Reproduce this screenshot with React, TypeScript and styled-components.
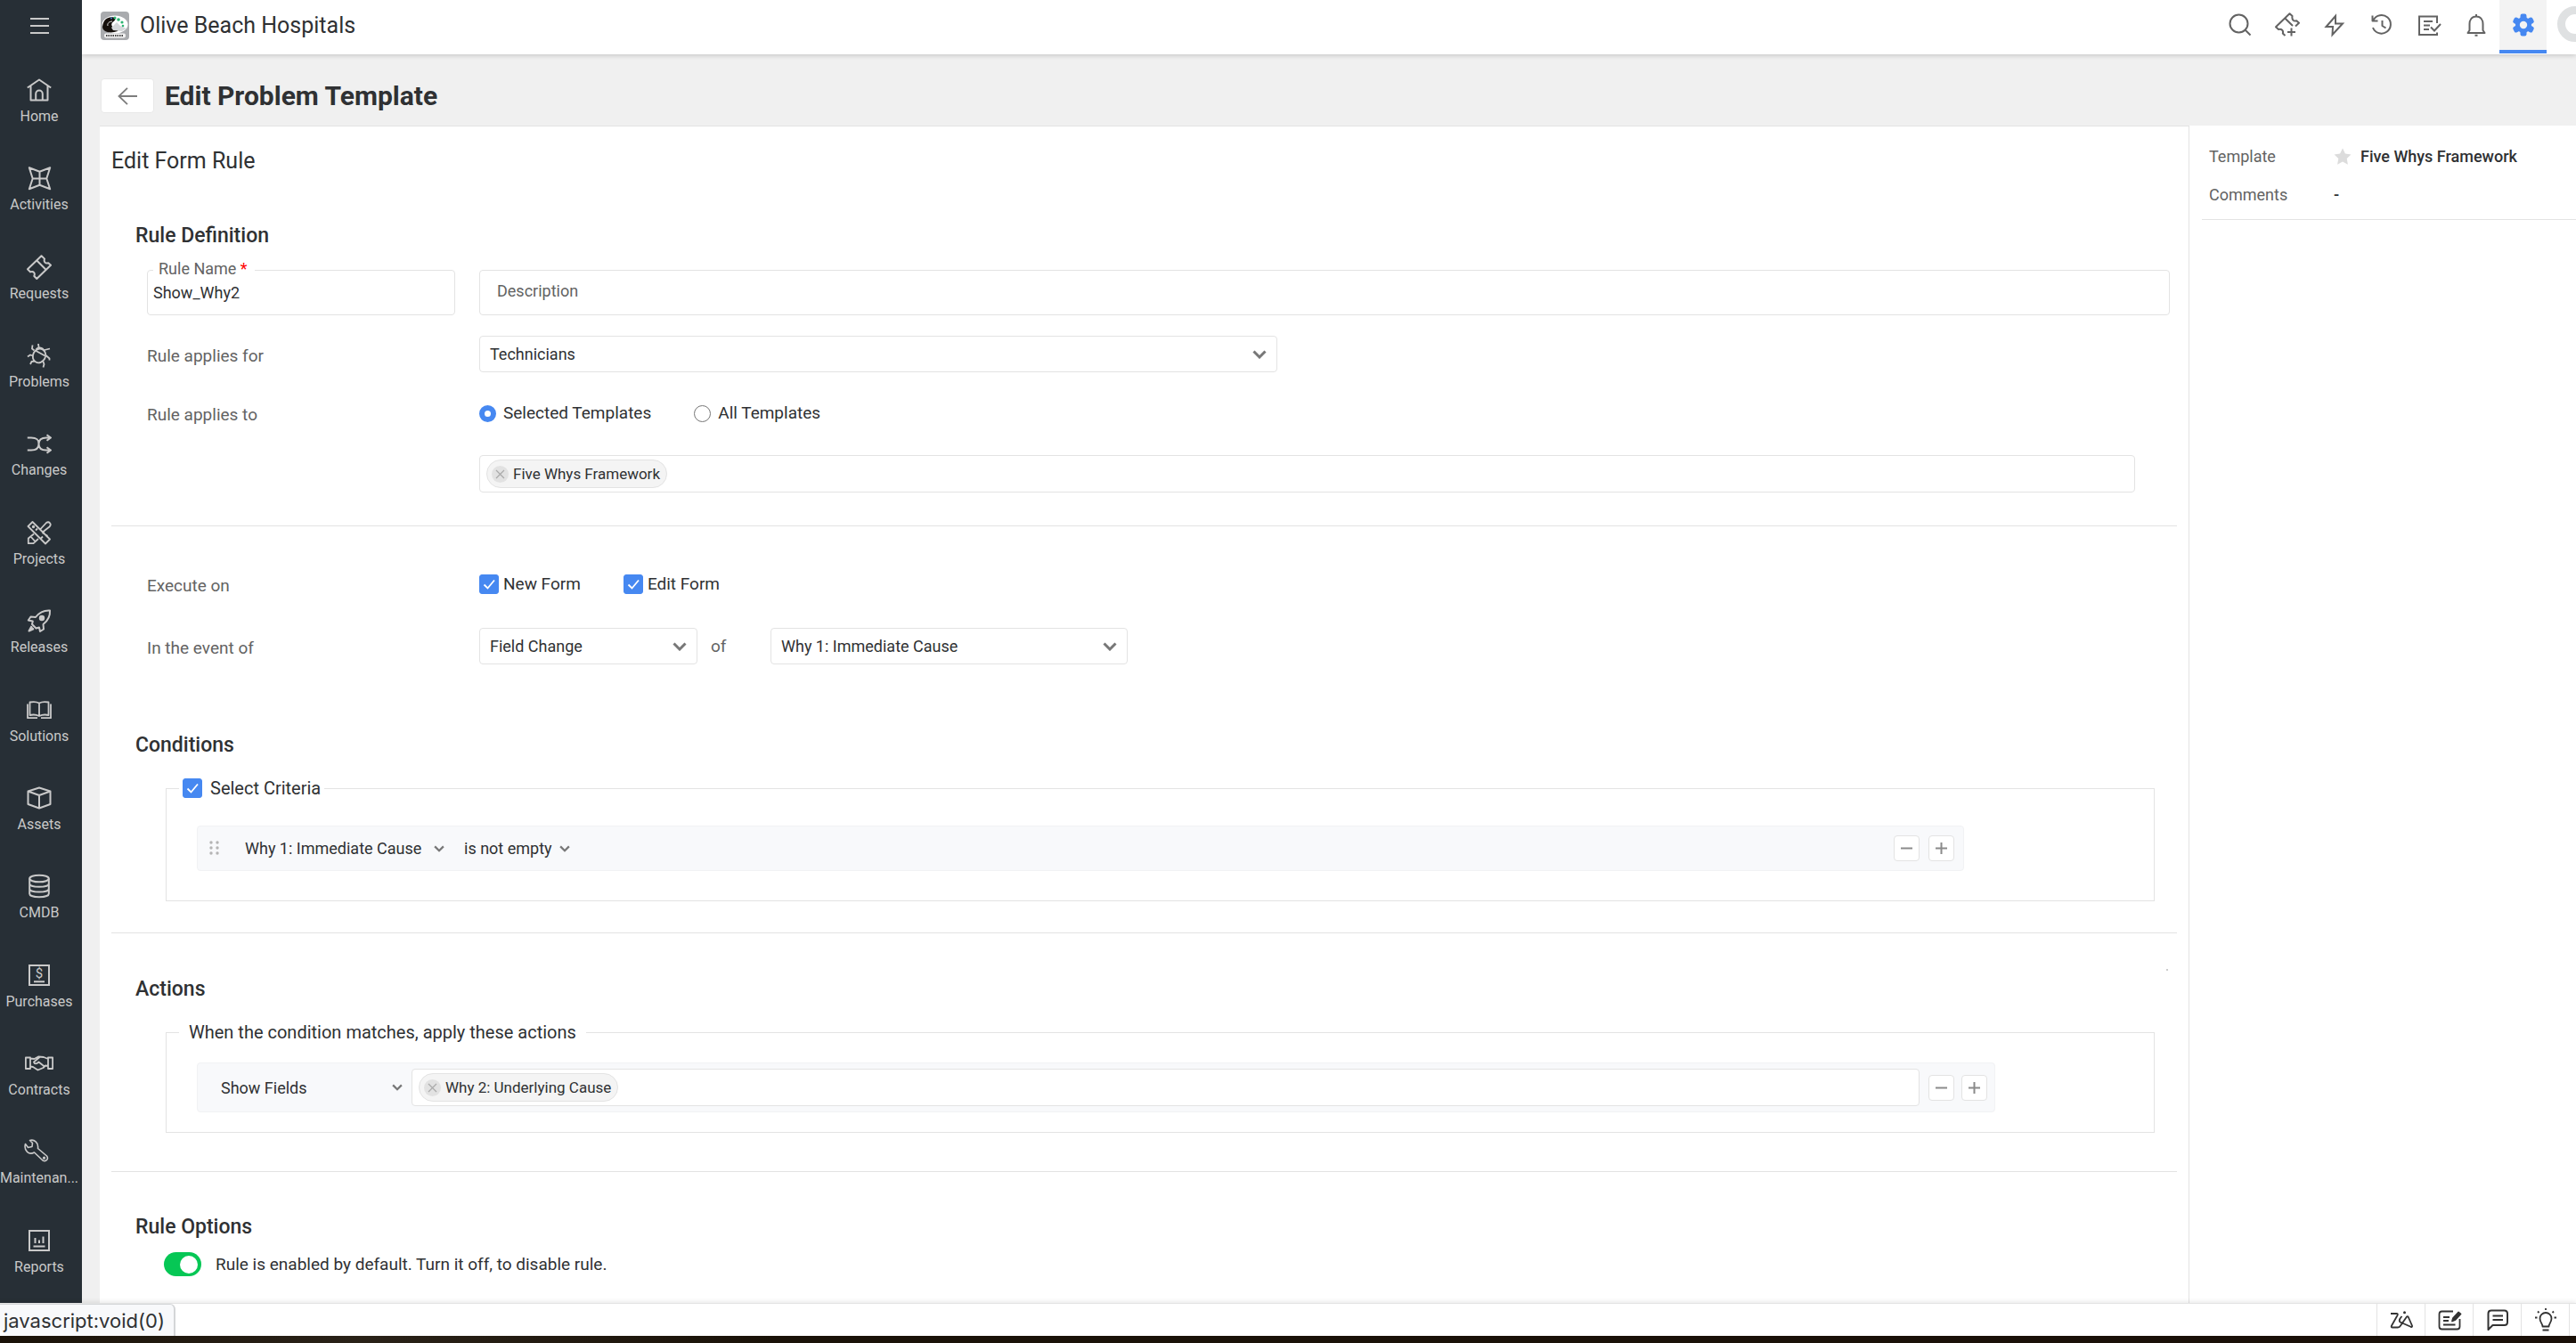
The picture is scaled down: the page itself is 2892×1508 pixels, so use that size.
import React from "react";
import styled, { createGlobalStyle, css } from "styled-components";

const color = {
  ink: "#2f3133",
  label: "#636363",
  line: "#e3e3e3",
  page: "#f0f0f0",
  blue: "#4688f1",
  nav: "#272f36",
  navText: "#c9c9c9",
  row: "#f8f9fb",
};

const GlobalStyle = createGlobalStyle`
  *, *::before, *::after { box-sizing: border-box; }
  html, body { margin: 0; height: 100%; }
  #root { height: 100%; }
  body, button {
    font-family: Roboto, "Liberation Sans", sans-serif;
    font-size: 19px;
    color: ${color.ink};
  }
  input, select {
    font-family: Roboto, "Liberation Sans", sans-serif;
    font-size: 18px;
    color: ${color.ink};
  }
  button { padding: 0; cursor: pointer; }
  body { overflow: hidden; background: ${color.page}; }
`;

/* ---------- shell ---------- */

const Shell = styled.div`
  display: flex;
  flex-direction: column;
  height: 100vh;
`;

const Workspace = styled.div`
  display: flex;
  flex: 1;
  min-height: 0;
`;

const Sidebar = styled.nav`
  display: flex;
  flex-direction: column;
  width: 92px;
  flex-shrink: 0;
  padding-right: 4px;
  background: ${color.nav};
  color: ${color.navText};
  overflow: hidden;
`;

const MenuButton = styled.button`
  display: flex;
  align-items: center;
  justify-content: center;
  height: 58px;
  margin-bottom: 14px;
  border: 0;
  background: none;
  color: inherit;
`;

const NavList = styled.ul`
  display: flex;
  flex-direction: column;
  flex: 1;
  margin: 0;
  padding: 0;
  list-style: none;
`;

const NavItem = styled.li`
  flex: 1;
`;

const NavLink = styled.a`
  display: flex;
  flex-direction: column;
  align-items: center;
  gap: 6px;
  padding-top: 15px;
  color: inherit;
  font-size: 16px;
  line-height: 20px;
  text-decoration: none;
  white-space: nowrap;
`;

const Main = styled.div`
  display: flex;
  flex-direction: column;
  flex: 1;
  min-width: 0;
`;

const TopBar = styled.header`
  display: flex;
  align-items: center;
  height: 61px;
  flex-shrink: 0;
  padding-left: 21px;
  background: #fff;
  box-shadow: 0 1px 6px rgba(0, 0, 0, 0.2);
  clip-path: inset(0 0 -8px 0);
`;

const Brand = styled.div`
  display: flex;
  align-items: center;
  gap: 12px;
  flex: 1;
  padding-bottom: 3px;
  font-size: 25px;
  line-height: 32px;
`;

const Tools = styled.div`
  display: flex;
  align-self: stretch;
`;

const Tool = styled.button<{ $active?: boolean }>`
  display: flex;
  align-items: center;
  justify-content: center;
  width: 53px;
  height: 60px;
  border: 0;
  border-bottom: 4px solid transparent;
  background: none;
  color: ${color.label};
  ${(p) =>
    p.$active &&
    css`
      background: #f3f3f3;
      border-bottom-color: ${color.blue};
      color: ${color.blue};
    `}
`;

const AvatarClip = styled.div`
  display: flex;
  align-items: center;
  width: 33px;
  padding: 0 0 8px 12px;
  overflow: hidden;
`;

const Avatar = styled.span`
  width: 40px;
  height: 40px;
  flex-shrink: 0;
  border: 9px solid #dfe1e2;
  border-radius: 50%;
`;

const PageHead = styled.div`
  display: flex;
  align-items: center;
  gap: 12px;
  flex-shrink: 0;
  padding: 27px 20px 14px 21px;
`;

const BackButton = styled.button`
  display: flex;
  align-items: center;
  justify-content: center;
  width: 60px;
  height: 39px;
  border: 1px solid #e8e8e8;
  border-radius: 4px;
  background: #fff;
  color: #7d7d7d;
`;

const PageTitle = styled.h1`
  margin: 0;
  font-size: 30px;
  font-weight: 700;
  line-height: 36px;
`;

const Columns = styled.div`
  display: flex;
  flex: 1;
  min-height: 0;
  padding-left: 20px;
`;

const Panel = styled.main`
  flex: 1;
  min-width: 0;
  padding: 23px 13px 0;
  border: solid ${color.line};
  border-width: 1px 1px 0 0;
  background: #fff;
  overflow: hidden;
`;

const Aside = styled.aside`
  width: 434px;
  flex-shrink: 0;
  padding: 19px 0 0 14px;
  background: #fff;
`;

const Facts = styled.dl`
  display: grid;
  grid-template-columns: 140px 1fr;
  row-gap: 15px;
  margin: 0;
  padding: 2px 0 13px 8px;
  border-bottom: 1px solid ${color.line};
  line-height: 28px;
`;

const FactName = styled.dt`
  font-size: 18px;
  color: ${color.label};
`;

const FactValue = styled.dd`
  display: flex;
  align-items: center;
  gap: 10px;
  margin: 0;
  font-size: 18px;
  font-weight: 500;
`;

/* ---------- form ---------- */

const FormTitle = styled.h2`
  margin: 0;
  font-size: 25px;
  font-weight: 400;
  line-height: 32px;
`;

const SectionTitle = styled.h3<{ $top: number }>`
  margin: ${(p) => p.$top}px 0 0 27px;
  font-size: 23px;
  font-weight: 500;
  line-height: 28px;
`;

const Divider = styled.hr<{ $top: number }>`
  height: 1px;
  margin: ${(p) => p.$top}px 0 0;
  border: 0;
  background: ${color.line};
`;

const Marker = styled.div`
  width: 2px;
  height: 2px;
  margin: 40px 10px 0 auto;
  background: #ccc;
`;

const FormRow = styled.div<{ $top: number }>`
  display: grid;
  grid-template-columns: 346px 1fr;
  column-gap: 27px;
  align-items: center;
  margin: ${(p) => p.$top}px 8px 0 40px;
`;

const labelText = css`
  color: ${color.label};
  font-size: 19px;
  line-height: 24px;
`;

const RowLabel = styled.label`
  ${labelText}
  padding-top: 4px;
`;

const RowName = styled.span`
  ${labelText}
  padding-top: 4px;
`;

const Inline = styled.div<{ $gap: number }>`
  display: flex;
  align-items: center;
  gap: ${(p) => p.$gap}px;
`;

const Joiner = styled.span`
  ${labelText}
  width: 82px;
  padding-left: 15px;
`;

const FloatField = styled.div`
  position: relative;
  height: 51px;
`;

const FloatLabel = styled.label`
  position: absolute;
  top: -13px;
  left: 7px;
  padding: 0 8px 0 6px;
  background: #fff;
  color: ${color.label};
  font-size: 18px;
  line-height: 24px;
`;

const Required = styled.span`
  color: #f00;
`;

const TextInput = styled.input<{ $inset: number }>`
  width: 100%;
  height: 51px;
  padding: 0 ${(p) => p.$inset}px;
  border: 1px solid ${color.line};
  border-radius: 4px;
  background: #fff;
  outline: 0;
  &::placeholder {
    color: ${color.label};
    opacity: 1;
  }
`;

const DescriptionInput = styled(TextInput)`
  padding-bottom: 4px;
`;

const SelectBox = styled.div<{ $width: number }>`
  display: grid;
  align-items: center;
  width: ${(p) => p.$width}px;
  max-width: 100%;
  color: #777;
  & > * {
    grid-area: 1 / 1;
  }
  & > svg {
    justify-self: end;
    margin-right: 12px;
    pointer-events: none;
  }
`;

const SelectControl = styled.select`
  width: 100%;
  height: 41px;
  padding: 0 36px 0 11px;
  border: 1px solid ${color.line};
  border-radius: 4px;
  background: #fff;
  appearance: none;
`;

const PlainSelectBox = styled(SelectBox)`
  & > svg {
    margin-right: 0;
  }
`;

const PlainSelect = styled.select`
  width: 100%;
  height: 32px;
  padding: 0 14px 0 0;
  border: 0;
  background: transparent;
  appearance: none;
`;

const Choice = styled.label<{ $gap: number }>`
  display: flex;
  align-items: center;
  gap: ${(p) => p.$gap}px;
  line-height: 24px;
`;

const Radio = styled.input`
  width: 19px;
  height: 19px;
  margin: 0;
  border: 1px solid #767676;
  border-radius: 50%;
  background: #fff;
  appearance: none;
  &:checked {
    border: 6px solid ${color.blue};
  }
`;

const CheckWrap = styled.span`
  display: grid;
  color: #fff;
  & > * {
    grid-area: 1 / 1;
  }
  & > svg {
    pointer-events: none;
  }
`;

const CheckInput = styled.input`
  width: 22px;
  height: 22px;
  margin: 0;
  border: 1px solid #999;
  border-radius: 3px;
  appearance: none;
  &:checked {
    border-color: ${color.blue};
    background: ${color.blue};
  }
`;

const TagField = styled.div`
  display: flex;
  align-items: center;
  flex: 1;
  min-width: 0;
  height: 42px;
  padding: 0 7px;
  border: 1px solid ${color.line};
  border-radius: 4px;
  background: #fff;
`;

const TagRow = styled.div`
  display: flex;
  grid-column: 2;
  margin-right: 39px;
`;

const Tag = styled.span`
  display: flex;
  align-items: center;
  gap: 5px;
  height: 32px;
  padding: 0 7px 0 5px;
  border: 1px solid ${color.line};
  border-radius: 16px;
  background: #f4f4f4;
  font-size: 17px;
  line-height: 24px;
  white-space: nowrap;
`;

const TagRemove = styled.button`
  display: flex;
  align-items: center;
  justify-content: center;
  width: 19px;
  height: 19px;
  border: 0;
  border-radius: 50%;
  background: #e2e2e2;
  color: #aaa;
`;

const TagInput = styled.input`
  flex: 1;
  min-width: 0;
  border: 0;
  outline: 0;
  background: none;
`;

const Group = styled.fieldset<{ $pad: string }>`
  margin: 22px 25px 0 61px;
  padding: ${(p) => p.$pad};
  border: 1px solid ${color.line};
`;

const GroupLegend = styled.legend<{ $inset: number }>`
  margin-left: -20px;
  padding: 0 ${(p) => p.$inset}px;
  font-size: 20px;
  line-height: 24px;
`;

const RuleRow = styled.div<{ $height: number }>`
  display: flex;
  align-items: center;
  height: ${(p) => p.$height}px;
  border: 1px solid #f1f2f4;
  border-radius: 4px;
  background: ${color.row};
`;

const Handle = styled.button`
  display: flex;
  margin: 0 28px 0 13px;
  border: 0;
  background: none;
  color: #b4b4b4;
`;

const ActionCell = styled.div`
  padding: 0 10px 0 26px;
`;

const StepButtons = styled.div<{ $gap: number }>`
  display: flex;
  gap: ${(p) => p.$gap}px;
  margin: 0 ${(p) => p.$gap}px 0 auto;
  padding-left: 10px;
`;

const StepButton = styled.button`
  display: flex;
  align-items: center;
  justify-content: center;
  width: 29px;
  height: 29px;
  border: 1px solid ${color.line};
  border-radius: 4px;
  background: #fff;
  color: #8a8a8a;
`;

const SwitchRow = styled.label`
  display: flex;
  align-items: center;
  gap: 16px;
  margin: 14px 0 0 59px;
  line-height: 27px;
`;

const Switch = styled.input`
  display: flex;
  align-items: center;
  justify-content: flex-end;
  width: 42px;
  height: 27px;
  margin: 0;
  padding: 0 4px;
  border-radius: 14px;
  background: #06c755;
  appearance: none;
  &::before {
    content: "";
    width: 20px;
    height: 20px;
    border-radius: 50%;
    background: #fff;
  }
`;

/* ---------- footer ---------- */

const Footer = styled.footer`
  position: relative;
  display: flex;
  justify-content: space-between;
  height: 37px;
  flex-shrink: 0;
  background: #fff;
  border-top: 1px solid #e3e3e3;
  box-shadow: 0 -2px 5px rgba(0, 0, 0, 0.08);
`;

const LinkStatus = styled.div`
  padding: 0 10px 0 4px;
  border: solid #d4d6d8;
  border-width: 1px 2px 0 0;
  border-radius: 0 6px 0 12px;
  background: #f8f9fb;
  font-family: Inter, sans-serif;
  font-size: 22px;
  line-height: 36px;
`;

const FooterTools = styled.div`
  display: flex;
  padding-right: 7px;
  border-left: 1px solid ${color.line};
`;

const FooterTool = styled.button`
  display: flex;
  align-items: center;
  justify-content: center;
  width: 54px;
  border: 0;
  border-right: 1px solid ${color.line};
  background: none;
  color: #333;
`;

const Desktop = styled.div`
  height: 8px;
  flex-shrink: 0;
  background: linear-gradient(90deg, #1a1208 0%, #2a2218 14%, #1a1208 30%, #1a1008 100%);
`;

/* ---------- icons ---------- */

type IconProps = { size?: number; stroke?: number; children: React.ReactNode; join?: "round" | "miter" };

const Icon = ({ size = 28, stroke = 2, join = "round", children }: IconProps) => (
  <svg
    width={size}
    height={size}
    viewBox="0 0 28 28"
    fill="none"
    stroke="currentColor"
    strokeWidth={stroke}
    strokeLinejoin={join}
    aria-hidden="true"
  >
    {children}
  </svg>
);

const Chevron = ({ small }: { small?: boolean }) => (
  <svg
    width={small ? 12 : 16}
    height={small ? 8 : 10}
    viewBox="0 0 16 10"
    fill="none"
    stroke="currentColor"
    strokeWidth="3"
    aria-hidden="true"
  >
    <path d="M1.5 1.5 8 8l6.5-6.5" />
  </svg>
);

const Tick = () => (
  <svg width="22" height="22" viewBox="0 0 22 22" fill="none" stroke="currentColor" strokeWidth="1.8" aria-hidden="true">
    <path d="M5.5 11.5 9.5 15.5 17 6.5" />
  </svg>
);

const Minus = () => (
  <svg width="13" height="13" viewBox="0 0 13 13" stroke="currentColor" strokeWidth="2" aria-hidden="true">
    <path d="M0 6.5H13" />
  </svg>
);

const Plus = () => (
  <svg width="13" height="13" viewBox="0 0 13 13" stroke="currentColor" strokeWidth="2" aria-hidden="true">
    <path d="M0 6.5H13M6.5 0V13" />
  </svg>
);

const navIcons: Record<string, React.ReactNode> = {
  Home: (
    <Icon>
      <path d="M.8 11.5 14 2.5l13.2 9M4.5 9.5V25.500h19V9.500M10.200 25.500v-7a3.800 4 0 0 1 7.600 0v7" />
    </Icon>
  ),
  Activities: (
    <Icon>
      <path d="M2.8 2.2 14.5 6.8 26.2 2.2 22.3 14.5 26.2 26.2 14.5 21.8 2.8 26.2 6.7 14.5ZM14.5 6.8V21.800M6.700 14.500H22.300" />
    </Icon>
  ),
  Requests: (
    <Icon>
      <path d="M16.5 1.2 20 4.6C18.8 8 21 10.400 24.200 9.200L27 11.800 11.300 27 8.300 24C9.800 20.500 7.500 18 4 19.400L1 16.300ZM11.800 7 21 16.200" />
    </Icon>
  ),
  Problems: (
    <Icon stroke={1.8}>
      <ellipse cx="14" cy="14.5" rx="7" ry="8" transform="rotate(28 14 14.5)" />
      <path d="M9.5 8.5 20.5 14.5M10.5 7.5C12 4.5 17.5 4 20 9.500M13.500 5 13 1M20 8l6-1.500M21.500 14l4 3.500v2M18.500 21l1 3-1 3.500M8.500 8.500 6 6.500l.5-4M7 14.500l-3-1-3 2M9 20.500l-3.500.5-1.500 3" />
    </Icon>
  ),
  Changes: (
    <Icon>
      <path d="M.8 7.5H5C12 7.5 13.5 10 13.5 14.5S11 21.5 5 21.500H.8M26 7.500H22C15.500 7.500 13.500 10 13.500 14.500S15.500 21.500 22 21.500H26M22.500 4.200 27 7.500l-4.500 3.300M22.500 18.200 27 21.500l-4.500 3.300" />
    </Icon>
  ),
  Projects: (
    <Icon stroke={1.8}>
      <path d="M6.5 2 26 21.5 21 26.5 1.5 7ZM10 11.5l2-2M17.500 15l2-2M16 20.500l2-2M21.500 18.500l2-1.500M8 15.500 1.800 20.500V26.200H7.500L13 21M4.500 18.500 9.500 24M15.500 10 22 3C25 .8 28.500 4.500 25.500 7.500L18.500 13" />
      <circle cx="7.5" cy="7.5" r=".8" />
    </Icon>
  ),
  Releases: (
    <Icon>
      <path d="M26 2.5C18.5 2 13.5 5.5 10 10L4.5 9.5 1.8 13.5 6.8 14.5 6 18 10.5 22.5 14 21.500 15 26 19 23.500 18.500 18C23 14.500 26.500 9.500 26 2.500Z" />
      <circle cx="17" cy="11" r="2.2" fill="currentColor" />
      <path d="M5.5 20 2.5 25.5 8 23" fill="currentColor" />
    </Icon>
  ),
  Solutions: (
    <Icon stroke={1.8}>
      <path d="M14 6.500C11 4.800 7 4.800 3.500 5.500V20C7 19.200 11 19.500 14 21 17 19.500 21 19.200 24.500 20V5.500C21 4.800 17 4.800 14 6.500V21M1 7.500V23.200H12M27 7.500V23.200H16" />
    </Icon>
  ),
  Assets: (
    <Icon>
      <path d="M14 2.5 26.5 6.5V21L14 25.5 1.5 21V6.500ZM1.500 6.500 14 11 26.500 6.500M14 11V25.500" />
    </Icon>
  ),
  CMDB: (
    <Icon>
      <ellipse cx="14" cy="5.5" rx="10.8" ry="3.8" />
      <path d="M3.2 5.5V22.5C3.2 27.5 24.8 27.5 24.8 22.5V5.5M3.2 11.200C3.200 16 24.800 16 24.800 11.200M3.200 17C3.200 21.800 24.800 21.800 24.800 17" />
    </Icon>
  ),
  Purchases: (
    <Icon join="miter">
      <path d="M3 3H25V25H3ZM8 21.2H20" />
      <text x="14" y="16.5" fontSize="15" textAnchor="middle" fill="currentColor" stroke="none">
        $
      </text>
    </Icon>
  ),
  Contracts: (
    <svg
      width="32"
      height="28"
      viewBox="0 0 32 28"
      fill="none"
      stroke="currentColor"
      strokeWidth="1.8"
      strokeLinejoin="round"
      aria-hidden="true"
    >
      <path d="M.9 7.500H6V20H.9ZM26 7.500H31.100V20H26ZM6 8.500 10.500 9 15 6.500 21 7 26 9M6 17.500 9 18 14.500 21.500 20.500 19 23 16.500 26 17M16.500 7 10 12.500C10.500 15 13 15 15.500 12.500L22.500 18" />
    </svg>
  ),
  "Maintenan...": (
    <svg
      width="34"
      height="28"
      viewBox="0 0 34 28"
      fill="none"
      stroke="currentColor"
      strokeWidth="1.6"
      strokeLinejoin="round"
      aria-hidden="true"
    >
      <path d="M1.500 5.500 4.500 9.500 9 8.500 9.500 4.500 6.500 1.500C11 0 16.500 3.500 15.500 10.500L25.500 19C28 22.500 24.500 26 21 24L11.500 15C5.500 18.500-.500 13 1.500 5.500Z" />
      <circle cx="22.5" cy="21.2" r=".8" />
    </svg>
  ),
  Reports: (
    <Icon join="miter">
      <path d="M3 3H25V25H3ZM7.5 20.5H20.5M9.5 17V11M14 17V13.5M18.5 17V9.500" />
    </Icon>
  ),
};

const TicketPlusIcon = () => (
  <Icon>
    <path d="M11.5 26 8.8 23.5C9.8 20.5 7.5 18 4 19L1 16.3 16.500 1.200 19.500 4C18.800 8 21 10.400 24.200 9.200L27 11.800 23 15.500M11.800 7 20 15M18.500 17.500V26.500M14 22H23" />
  </Icon>
);

const topTools: { name: string; icon: React.ReactNode; active?: boolean }[] = [
  {
    name: "Search",
    icon: (
      <Icon>
        <circle cx="12.5" cy="12.5" r="10" />
        <path d="M19.5 19.5 25.5 25.5" />
      </Icon>
    ),
  },
  { name: "New request", icon: <TicketPlusIcon /> },
  {
    name: "Quick actions",
    icon: (
      <Icon join="miter">
        <path d="M15 4 4.500 16H12L11.500 25 23 12.500H15Z" />
      </Icon>
    ),
  },
  {
    name: "Recent items",
    icon: (
      <Icon>
        <path d="M4.5 8.500A10.300 10.300 0 1 1 4 17M3.500 3.500V9.500H9.500M14.500 9V15L18.500 17.500" />
      </Icon>
    ),
  },
  {
    name: "Tasks",
    icon: (
      <Icon join="miter">
        <path d="M23 12V4.5H3V25H23V22.500M8 10H18M8 14.500H15M8 19H14M16 16.500 20 20.500 27 13" />
      </Icon>
    ),
  },
  {
    name: "Notifications",
    icon: (
      <Icon>
        <path d="M14 4.500C8.500 4.500 6.500 9 6.500 13V20L4.500 23H23.500L21.500 20V13C21.500 9 19.500 4.500 14 4.500ZM14 2V5M12.500 25.800H15.500" />
      </Icon>
    ),
  },
  {
    name: "Admin",
    active: true,
    icon: (
      <svg width="26" height="28" viewBox="0 0 26 28" aria-hidden="true">
        <g fill="currentColor">
          {[0, 60, 120].map((a) => (
            <rect key={a} x="9.5" y="1.5" width="7" height="25" rx="2.2" transform={`rotate(${a} 13 14)`} />
          ))}
          <circle cx="13" cy="14" r="9" />
        </g>
        <circle cx="13" cy="14" r="4.2" fill="#f3f3f3" />
      </svg>
    ),
  },
];

const footerTools: { name: string; icon: React.ReactNode }[] = [
  {
    name: "Zia",
    icon: (
      <Icon stroke={1.8}>
        <path d="M2 7H8.500Q10.500 7 9.500 9L3 20.500Q2 22.500 4 22.500H10Q12 22.500 13 20.500L20 10.500Q21 9.500 21.800 11L26 20.500Q26.500 22.500 24.500 21.800L12.500 16.500Q11 15 12.500 12.500L14.500 10" />
        <circle cx="17.5" cy="5.8" r="1.5" fill="currentColor" stroke="none" />
      </Icon>
    ),
  },
  {
    name: "Notes",
    icon: (
      <Icon stroke={1.8}>
        <path d="M18 4.500H5.500Q2.500 4.500 2.500 7.500V21.500Q2.500 24.500 5.500 24.500H22.500Q25.500 24.500 25.500 21.500V13M7 11H14M7 15H13M7 19.500H20.500" />
        <path d="M17 15.500 18 12 24 5.500 26.500 7.500 20.500 14Z" fill="currentColor" />
      </Icon>
    ),
  },
  {
    name: "Chat",
    icon: (
      <Icon>
        <path d="M3.500 25V7Q3.500 3.500 7 3.500H21.500Q25 3.500 25 7V16.500Q25 20 21.500 20H8.500ZM8.500 9.500H20M8.500 14H20" />
      </Icon>
    ),
  },
  {
    name: "Tips",
    icon: (
      <Icon stroke={1.8}>
        <path d="M10.500 21.500C10.500 18 7.500 17 7.500 12.500A6.500 6.500 0 0 1 20.500 12.500C20.500 17 17.500 18 17.500 21.500ZM10.500 25.500H17.500M14 3V1M6.500 6 5 4.500M21.500 6 23 4.500M4.500 11.500H2M23.500 11.500H26" />
      </Icon>
    ),
  },
];

const BrandMark = () => (
  <svg width="32" height="32" viewBox="0 0 32 32" aria-hidden="true">
    <rect width="32" height="32" rx="4" fill="#a9abae" />
    <ellipse cx="16" cy="14.5" rx="14.5" ry="10" fill="#fff" />
    <path d="M2 17C3 8 9 5 15 6.500 18 8 16 10 13 12.500 11 15 13 19 20 20L19 22C11 25 2 23 2 17Z" fill="#16110d" />
    <path d="M8 16C7 13 10 11 13 11" fill="none" stroke="#ddd" />
    <path d="M12 18 18 12 22 16 29 19 24 22 14 21Z" fill="#d5d8da" />
    <g fill="#2db573">
      <circle cx="16" cy="7" r="1.5" />
      <circle cx="20" cy="9" r="1.8" />
      <circle cx="24" cy="12" r="1.6" />
      <circle cx="25" cy="16" r="1.3" />
    </g>
    <circle cx="12" cy="7.5" r="1" fill="#3d7ed0" />
    <rect x="4" y="24.5" width="24" height="5" rx="2" fill="#f2f2f2" />
    <path d="M6 27H26" stroke="#444" strokeWidth="2" strokeDasharray="1.5 1" />
  </svg>
);

/* ---------- parts ---------- */

const Checkbox = () => (
  <CheckWrap>
    <CheckInput type="checkbox" defaultChecked />
    <Tick />
  </CheckWrap>
);

const Chip = ({ text }: { text: string }) => (
  <Tag>
    <TagRemove type="button" aria-label={`Remove ${text}`}>
      <svg width="11" height="11" viewBox="0 0 11 11" stroke="currentColor" strokeWidth="1.2" aria-hidden="true">
        <path d="M1 1 10 10M10 1 1 10" />
      </svg>
    </TagRemove>
    {text}
  </Tag>
);

const Steps = ({ gap }: { gap: number }) => (
  <StepButtons $gap={gap}>
    <StepButton type="button" aria-label="Remove row">
      <Minus />
    </StepButton>
    <StepButton type="button" aria-label="Add row">
      <Plus />
    </StepButton>
  </StepButtons>
);

const Dropdown = ({ id, value, width, label }: { id: string; value: string; width: number; label?: string }) => (
  <SelectBox $width={width}>
    <SelectControl id={id} aria-label={label} defaultValue={value}>
      <option>{value}</option>
    </SelectControl>
    <Chevron />
  </SelectBox>
);

const PlainDropdown = ({ value, width, label }: { value: string; width: number; label: string }) => (
  <PlainSelectBox $width={width}>
    <PlainSelect aria-label={label} defaultValue={value}>
      <option>{value}</option>
    </PlainSelect>
    <Chevron small />
  </PlainSelectBox>
);

export default function App() {
  return (
    <Shell>
      <GlobalStyle />
      <Workspace>
        <Sidebar aria-label="Modules">
          <MenuButton type="button" aria-label="Menu">
            <svg width="21" height="18" viewBox="0 0 21 18" stroke="currentColor" strokeWidth="2" aria-hidden="true">
              <path d="M0 1H21M0 9H21M0 17H21" />
            </svg>
          </MenuButton>
          <NavList>
            {Object.entries(navIcons).map(([name, icon]) => (
              <NavItem key={name}>
                <NavLink href="#">
                  {icon}
                  {name}
                </NavLink>
              </NavItem>
            ))}
          </NavList>
        </Sidebar>

        <Main>
          <TopBar>
            <Brand>
              <BrandMark />
              Olive Beach Hospitals
            </Brand>
            <Tools>
              {topTools.map((t) => (
                <Tool key={t.name} type="button" aria-label={t.name} $active={t.active}>
                  {t.icon}
                </Tool>
              ))}
              <AvatarClip>
                <Avatar />
              </AvatarClip>
            </Tools>
          </TopBar>

          <PageHead>
            <BackButton type="button" aria-label="Back">
              <svg width="22" height="20" viewBox="0 0 22 20" fill="none" stroke="currentColor" strokeWidth="1.8" aria-hidden="true">
                <path d="M11 .8 1.5 10 11 19.2M1.5 10H22" />
              </svg>
            </BackButton>
            <PageTitle>Edit Problem Template</PageTitle>
          </PageHead>

          <Columns>
            <Panel>
              <FormTitle>Edit Form Rule</FormTitle>

              <SectionTitle $top={54}>Rule Definition</SectionTitle>
              <FormRow $top={24}>
                <FloatField>
                  <FloatLabel htmlFor="rule-name">
                    Rule Name <Required>*</Required>
                  </FloatLabel>
                  <TextInput id="rule-name" $inset={6} defaultValue="Show_Why2" />
                </FloatField>
                <DescriptionInput $inset={19} aria-label="Description" placeholder="Description" />
              </FormRow>
              <FormRow $top={23}>
                <RowLabel htmlFor="applies-for">Rule applies for</RowLabel>
                <Dropdown id="applies-for" value="Technicians" width={896} />
              </FormRow>
              <FormRow $top={32}>
                <RowName>Rule applies to</RowName>
                <Inline $gap={48}>
                  <Choice $gap={8}>
                    <Radio type="radio" name="scope" defaultChecked />
                    Selected Templates
                  </Choice>
                  <Choice $gap={8}>
                    <Radio type="radio" name="scope" />
                    All Templates
                  </Choice>
                </Inline>
              </FormRow>
              <FormRow $top={33}>
                <TagRow>
                  <TagField>
                    <Chip text="Five Whys Framework" />
                    <TagInput aria-label="Add template" />
                  </TagField>
                </TagRow>
              </FormRow>

              <Divider $top={37} />

              <FormRow $top={51}>
                <RowName>Execute on</RowName>
                <Inline $gap={48}>
                  <Choice $gap={5}>
                    <Checkbox />
                    New Form
                  </Choice>
                  <Choice $gap={5}>
                    <Checkbox />
                    Edit Form
                  </Choice>
                </Inline>
              </FormRow>
              <FormRow $top={35}>
                <RowLabel htmlFor="event">In the event of</RowLabel>
                <Inline $gap={0}>
                  <Dropdown id="event" value="Field Change" width={245} />
                  <Joiner>of</Joiner>
                  <Dropdown id="event-field" value="Why 1: Immediate Cause" width={401} label="Event field" />
                </Inline>
              </FormRow>

              <SectionTitle $top={77}>Conditions</SectionTitle>
              <Group $pad="30px 213px 33px 34px">
                <GroupLegend $inset={4}>
                  <Choice $gap={9}>
                    <Checkbox />
                    Select Criteria
                  </Choice>
                </GroupLegend>
                <RuleRow $height={51}>
                  <Handle type="button" aria-label="Drag row">
                    <svg width="12" height="18" viewBox="0 0 12 18" fill="currentColor" aria-hidden="true">
                      {[2, 8, 14].map((y) => (
                        <React.Fragment key={y}>
                          <circle cx="2" cy={y} r="1.7" />
                          <circle cx="9" cy={y} r="1.7" />
                        </React.Fragment>
                      ))}
                    </svg>
                  </Handle>
                  <Inline $gap={22}>
                    <PlainDropdown value="Why 1: Immediate Cause" width={224} label="Criteria field" />
                    <PlainDropdown value="is not empty" width={119} label="Criteria operator" />
                  </Inline>
                  <Steps gap={10} />
                </RuleRow>
              </Group>

              <Divider $top={35} />
              <Marker />

              <SectionTitle $top={7}>Actions</SectionTitle>
              <Group $pad="22px 178px 22px 34px">
                <GroupLegend $inset={11}>When the condition matches, apply these actions</GroupLegend>
                <RuleRow $height={56}>
                  <ActionCell>
                    <PlainDropdown value="Show Fields" width={204} label="Action" />
                  </ActionCell>
                  <TagField>
                    <Chip text="Why 2: Underlying Cause" />
                    <TagInput aria-label="Add field" />
                  </TagField>
                  <Steps gap={8} />
                </RuleRow>
              </Group>

              <Divider $top={43} />

              <SectionTitle $top={48}>Rule Options</SectionTitle>
              <SwitchRow>
                <Switch type="checkbox" role="switch" defaultChecked />
                Rule is enabled by default. Turn it off, to disable rule.
              </SwitchRow>
            </Panel>

            <Aside>
              <Facts>
                <FactName>Template</FactName>
                <FactValue>
                  <svg width="20" height="20" viewBox="0 0 20 20" fill="#dcdcdc" aria-hidden="true">
                    <path d="M10 .5 12.900 6.500 19.500 7.400 14.700 12 15.900 18.800 10 15.600 4.100 18.800 5.300 12 .5 7.400 7.100 6.500Z" />
                  </svg>
                  Five Whys Framework
                </FactValue>
                <FactName>Comments</FactName>
                <FactValue>-</FactValue>
              </Facts>
            </Aside>
          </Columns>
        </Main>
      </Workspace>

      <Footer>
        <LinkStatus>javascript:void(0)</LinkStatus>
        <FooterTools>
          {footerTools.map((t) => (
            <FooterTool key={t.name} type="button" aria-label={t.name}>
              {t.icon}
            </FooterTool>
          ))}
        </FooterTools>
      </Footer>
      <Desktop />
    </Shell>
  );
}
